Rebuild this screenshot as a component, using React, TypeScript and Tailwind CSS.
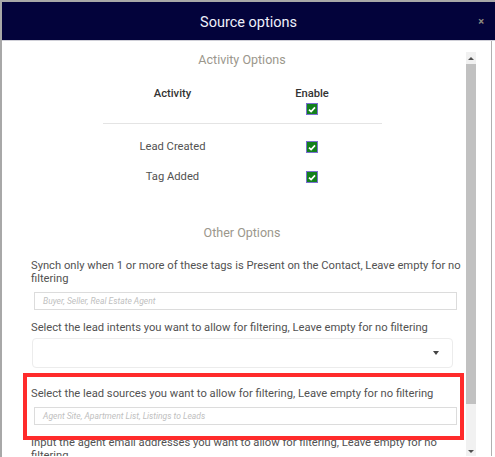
const Check = () => (
  <div className="w-[12px] h-[12px] bg-[#12801c] border border-[#7a6fd0] flex items-center justify-center">
    <svg width="8" height="7" viewBox="0 0 8 7">
      <path d="M1 3.6 L3.1 5.6 L7 1.4" stroke="#fff" strokeWidth="1.7" fill="none" />
    </svg>
  </div>
);

const Scrollbar = () => (
  <div className="w-[10px] mt-[11px] bg-[#f1f1f1] flex flex-col items-center">
    <div className="h-[12px] flex items-center justify-center">
      <div className="w-0 h-0 border-l-[3px] border-r-[3px] border-b-[3px] border-l-transparent border-r-transparent border-b-[#505050]" />
    </div>
    <div className="w-[10px] h-[340px] bg-[#c1c1c1]" />
    <div className="flex-1" />
    <div className="h-[10px] flex items-center justify-center">
      <div className="w-0 h-0 border-l-[3px] border-r-[3px] border-t-[3px] border-l-transparent border-r-transparent border-t-[#505050]" />
    </div>
  </div>
);

export default function App() {
  return (
    <div className="relative w-[495px] h-[457px] overflow-hidden bg-white font-['Roboto',sans-serif] border-t-2 border-l-2 border-[#a8a8a8]">
      <div className="h-[39px] bg-[#03033b] flex items-center justify-center relative border-b border-[#d0d0d8]">
        <span className="text-[14.5px] leading-[18px] mt-[3px] text-[#eef0fa]">Source options</span>
        <span className="absolute right-[11px] top-[12px] text-[11px] font-bold text-[#8e8c80]">×</span>
      </div>
      <div className="flex h-[415px] border-r border-[#b0b0b0] w-[490px]">
        <div className="w-[464px] pl-[16px] overflow-hidden text-[11.2px] leading-[13px] text-[#525252]">
          <div className="pt-[11px] h-[27px] text-center text-[12.5px] leading-[16px] text-[#9b978c]">Activity Options</div>
          <div className="mx-auto w-[279px] mt-[19px]">
            <div className="flex border-b border-[#e4e4e4] pb-[8px]">
              <div className="w-[140px] text-center font-medium text-[#333] leading-[14px]">Activity</div>
              <div className="w-[139px] flex flex-col items-center">
                <div className="font-medium text-[#333] leading-[14px]">Enable</div>
                <div className="mt-[2px]"><Check /></div>
              </div>
            </div>
            <div className="mt-[7px] flex h-[30px] items-center">
              <div className="w-[140px] text-center">Lead Created</div>
              <div className="w-[139px] flex justify-center pt-[2px]"><Check /></div>
            </div>
            <div className="flex h-[30px] items-center">
              <div className="w-[140px] text-center">Tag Added</div>
              <div className="w-[139px] flex justify-center pt-[2px]"><Check /></div>
            </div>
          </div>
          <div className="mt-[34px] text-center text-[12.5px] leading-[16px] text-[#9b978c]">Other Options</div>
          <div className="ml-[13px] mt-[18px] w-[430px]">
            Synch only when 1 or more of these tags is Present on the Contact, Leave empty for no filtering
          </div>
          <div className="ml-[16px] mt-[7px] w-[423px] h-[18px] border border-[#dcdcdc] flex items-center pl-[8px] text-[8.5px] italic text-[#c0c0c0]">
            Buyer, Seller, Real Estate Agent
          </div>
          <div className="ml-[13px] mt-[11px]">
            Select the lead intents you want to allow for filtering, Leave empty for no filtering
          </div>
          <div className="ml-[14px] mt-[4px] w-[421px] h-[30px] border border-[#ececec] rounded-[4px] flex items-center justify-end pr-[13px]">
            <div className="w-0 h-0 border-l-[3.5px] border-r-[3.5px] border-t-[4px] border-l-transparent border-r-transparent border-t-[#444]" />
          </div>
          <div className="ml-[13px] mt-[19px]">
            Select the lead sources you want to allow for filtering, Leave empty for no filtering
          </div>
          <div className="ml-[16px] mt-[7px] w-[423px] h-[18px] border border-[#dcdcdc] flex items-center pl-[8px] text-[8.5px] italic text-[#c0c0c0]">
            Agent Site, Apartment List, Listings to Leads
          </div>
          <div className="ml-[13px] mt-[11px] w-[430px]">
            Input the agent email addresses you want to allow for filtering, Leave empty for no filtering
          </div>
        </div>
        <Scrollbar />
      </div>
      <div className="absolute left-[21px] top-[371px] w-[441px] h-[67px] border-[4px] border-[#ff2b2b]" />
    </div>
  );
}
